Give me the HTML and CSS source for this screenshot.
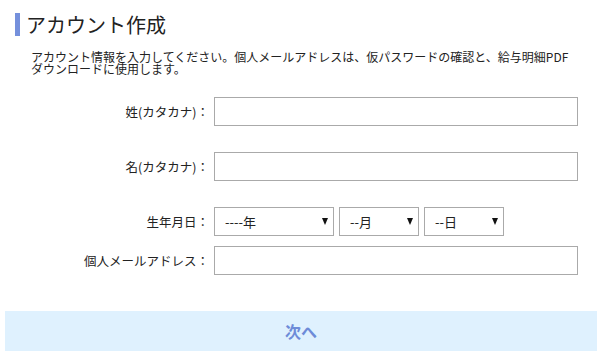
FILE: index.html
```html
<!DOCTYPE html>
<html lang="ja">
<head>
    <meta charset="UTF-8">
    <meta name="viewport" content="width=device-width, initial-scale=1.0">
    <title>アカウント作成</title>
    <link rel="stylesheet" href="styles.css">
</head>
<body>
    <div class="page">
        <h1 class="page-title">アカウント作成</h1>
        <p class="lead">アカウント情報を入力してください。個人メールアドレスは、仮パスワードの確認と、給与明細PDFダウンロードに使用します。</p>
        <form class="account-form">
            <div class="row row-wide">
                <label for="last-name">姓(カタカナ)：</label>
                <input type="text" id="last-name">
            </div>
            <div class="row row-wide">
                <label for="first-name">名(カタカナ)：</label>
                <input type="text" id="first-name">
            </div>
            <div class="row">
                <label for="birth-year">生年月日：</label>
                <div class="selects">
                    <span class="select-wrap year">
                        <select id="birth-year"><option>----年</option></select>
                    </span>
                    <span class="select-wrap month">
                        <select><option>--月</option></select>
                    </span>
                    <span class="select-wrap day">
                        <select><option>--日</option></select>
                    </span>
                </div>
            </div>
            <div class="row">
                <label for="email">個人メールアドレス：</label>
                <input type="text" id="email">
            </div>
            <button type="submit" class="next-btn">次へ</button>
        </form>
    </div>
</body>
</html>
```

FILE: styles.css
```css
body {
    margin: 0;
    font-family: "Noto Sans CJK JP", "Noto Sans", sans-serif;
    color: #222;
    background-color: #fff;
}
.page {
    padding: 13px 6px 0 5px;
}
.page-title {
    margin: 0 0 0 10px;
    padding-left: 6px;
    border-left: 5px solid #7590dc; /* barra azul do título */
    font-size: 20px;
    line-height: 23px;
    font-weight: normal;
}
.lead {
    max-width: 545px;
    margin: 15px 0 0 26px;
    font-size: 12px;
    line-height: 12px;
}
.account-form {
    margin-top: 22px;
}
.row {
    display: flex;
    align-items: center;
    margin-bottom: 10px;
}
.row-wide {
    margin-bottom: 26px;
}
.row label {
    width: 204px;
    padding-right: 5px;
    text-align: right;
    font-size: 12.5px;
}
.row input {
    width: 364px;
    height: 29px;
    box-sizing: border-box;
    border: 1px solid #aaa;
    margin: 0;
    padding: 0 6px;
}
.selects {
    display: flex;
    gap: 5px;
}
.select-wrap {
    position: relative;
    display: block;
}
.select-wrap select {
    appearance: none;
    -webkit-appearance: none;
    height: 29px;
    box-sizing: border-box;
    border: 1px solid #aaa;
    border-radius: 0;
    background-color: #fff;
    padding: 0 10px;
    font-family: "Noto Sans CJK JP", sans-serif;
    font-size: 13px;
    color: #222;
}
.year select {
    width: 120px;
}
.month select, .day select {
    width: 80px;
}
.select-wrap::after {
    content: "";
    position: absolute;
    right: 6px;
    top: 11px;
    border-left: 3px solid transparent;
    border-right: 3px solid transparent;
    border-top: 7px solid #111;
    pointer-events: none;
}
.next-btn {
    display: block;
    width: 100%;
    height: 40px;
    margin-top: 36px;
    border: none;
    background-color: #dff1fe; /* fundo do botão */
    color: #6d8bd8;
    font-family: "Noto Sans CJK JP", sans-serif;
    font-size: 16px;
    font-weight: bold;
    cursor: pointer;
}
```
